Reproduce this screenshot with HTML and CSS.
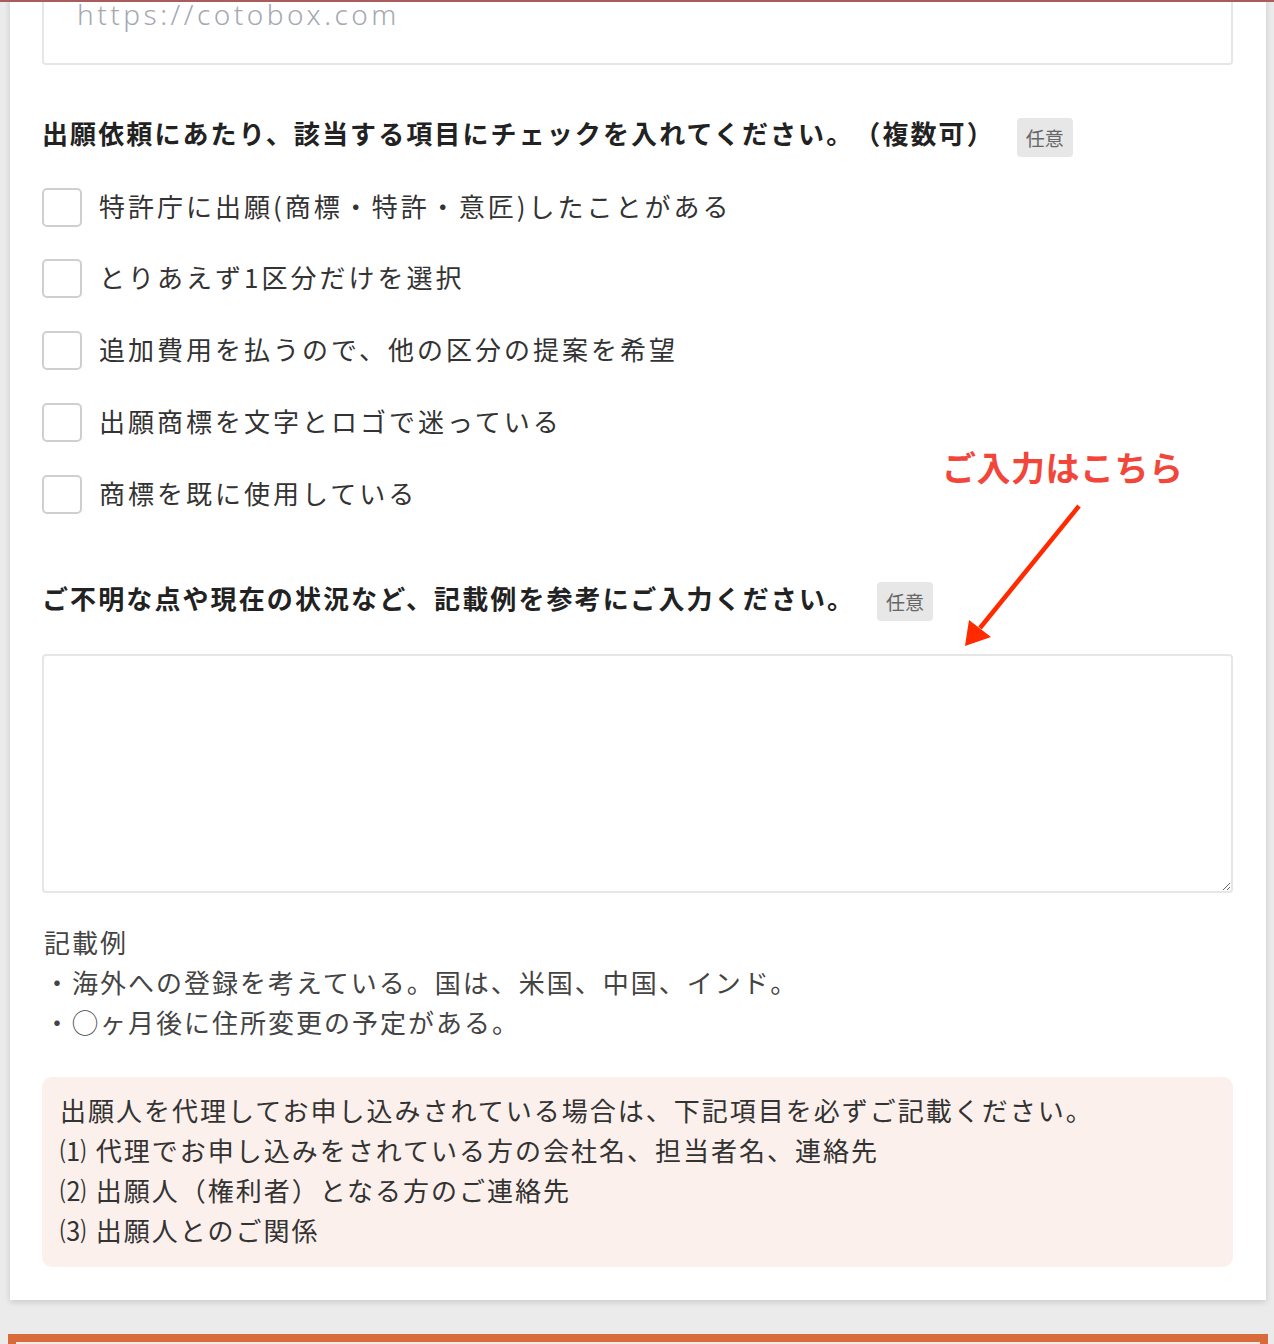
FILE: index.html
```html
<!DOCTYPE html>
<html lang="ja">
<head>
    <meta charset="UTF-8">
    <meta name="viewport" content="width=device-width, initial-scale=1.0">
    <title>出願依頼フォーム</title>
    <link rel="stylesheet" href="styles.css">
</head>
<body>
    <div class="top-line"></div>
    <div class="page">
        <div class="card">
            <input type="text" class="url-input" placeholder="https://cotobox.com">

            <div class="field-head">
                <h3>出願依頼にあたり、該当する項目にチェックを入れてください。（複数可）</h3>
                <span class="badge">任意</span>
            </div>
            <ul class="check-list">
                <li><label><input type="checkbox"><span>特許庁に出願(商標・特許・意匠)したことがある</span></label></li>
                <li><label><input type="checkbox"><span>とりあえず1区分だけを選択</span></label></li>
                <li><label><input type="checkbox"><span>追加費用を払うので、他の区分の提案を希望</span></label></li>
                <li><label><input type="checkbox"><span>出願商標を文字とロゴで迷っている</span></label></li>
                <li><label><input type="checkbox"><span>商標を既に使用している</span></label></li>
            </ul>

            <div class="field-head second">
                <h3>ご不明な点や現在の状況など、記載例を参考にご入力ください。</h3>
                <span class="badge">任意</span>
                <!-- annotation over the form -->
                <div class="note-tag">ご入力はこちら</div>
                <svg class="note-arrow" width="160" height="170" viewBox="0 0 160 170">
                    <line x1="139" y1="15" x2="40" y2="137" stroke="#ff2a00" stroke-width="4.5" />
                    <polygon points="25,155 29,129 51,146" fill="#ff2a00" />
                </svg>
            </div>
            <textarea class="memo"></textarea>

            <div class="example">
                <p>記載例</p>
                <p>・海外への登録を考えている。国は、米国、中国、インド。</p>
                <p>・◯ヶ月後に住所変更の予定がある。</p>
            </div>

            <div class="notice">
                <p>出願人を代理してお申し込みされている場合は、下記項目を必ずご記載ください。</p>
                <p>⑴ 代理でお申し込みをされている方の会社名、担当者名、連絡先</p>
                <p>⑵ 出願人（権利者）となる方のご連絡先</p>
                <p>⑶ 出願人とのご関係</p>
            </div>
        </div>

        <div class="submit-box"></div>
    </div>
</body>
</html>
```

FILE: styles.css
```css
body {
    margin: 0;
    background-color: #ebebeb;
    font-family: "Noto Sans CJK JP", "Noto Sans", sans-serif;
    color: #333333;
    overflow: hidden;
    text-spacing-trim: space-all;
}

.top-line {
    position: fixed;
    top: 0;
    left: 0;
    right: 0;
    height: 2px;
    background-color: #a95c5c;
    z-index: 5;
}

.page {
    padding: 0 8px 0 10px;
}

.card {
    background-color: #ffffff;
    padding: 0 33px 33px 32px;
    box-shadow: 0 2px 6px rgba(0, 0, 0, 0.15);
}

.url-input {
    display: block;
    width: 100%;
    height: 95px;
    margin: -30px 0 0;
    box-sizing: border-box;
    border: 2px solid #e6e6e6;
    border-radius: 4px;
    padding: 0 0 8px 33px;
    font-family: "Noto Sans", sans-serif;
    font-size: 28px;
    font-weight: 300;
    letter-spacing: 3.5px;
    color: #333333;
    outline: none;
}

.url-input::placeholder {
    color: #a4a9b1;
}

.field-head {
    display: flex;
    align-items: flex-start;
    margin-top: 48px;
}

.field-head.second {
    position: relative;
    margin-top: 64px;
}

.field-head h3 {
    margin: 0;
    font-size: 26px;
    line-height: 40px;
    font-weight: 700;
    letter-spacing: 2.1px;
    color: #222222;
}

.badge {
    margin: 5px 0 0 22px;
    padding: 0 9px;
    height: 39px;
    line-height: 39px;
    border-radius: 4px;
    background-color: #e7e7e7;
    color: #666666;
    font-size: 19px;
}

.field-head.second .badge {
    margin-top: 4px;
}

.check-list {
    list-style: none;
    margin: 30px 0 0;
    padding: 0;
    display: flex;
    flex-direction: column;
    gap: 31.75px;
}

.check-list label {
    display: flex;
    align-items: center;
    gap: 17px;
    height: 40px;
}

.check-list input {
    appearance: none;
    -webkit-appearance: none;
    margin: 0;
    width: 40px;
    height: 39px;
    box-sizing: border-box;
    border: 2px solid #cfcfcf;
    border-radius: 5px;
    background-color: #ffffff;
}

.check-list span {
    font-size: 26px;
    letter-spacing: 3px;
    color: #333333;
    margin-top: -4px;
}

.note-tag {
    position: absolute;
    left: 900px;
    top: -131px;
    font-size: 34px;
    line-height: 40px;
    font-weight: 700;
    letter-spacing: 0.5px;
    color: #f2463a;
}

.note-arrow {
    position: absolute;
    left: 898px;
    top: -87px;
}

.memo {
    display: block;
    width: 100%;
    height: 239px;
    margin-top: 33px;
    box-sizing: border-box;
    border: 2px solid #e6e6e6;
    border-radius: 4px;
    outline: none;
    resize: vertical;
}

.example {
    margin-top: 29px;
    padding-left: 2px;
    color: #444444;
}

.example p,
.notice p {
    margin: 0;
    font-size: 26px;
    line-height: 40px;
    letter-spacing: 2px;
}

.notice {
    margin-top: 35px;
    padding: 13px 18px 17px;
    border-radius: 10px;
    background-color: #fbf0eb;
    color: #333333;
}

.notice p {
    white-space: nowrap;
}

.submit-box {
    margin: 34px -2px 0 -2px;
    height: 60px;
    border: 8px solid #d96a3a;
    background-color: #f4ebe7;
}
```
